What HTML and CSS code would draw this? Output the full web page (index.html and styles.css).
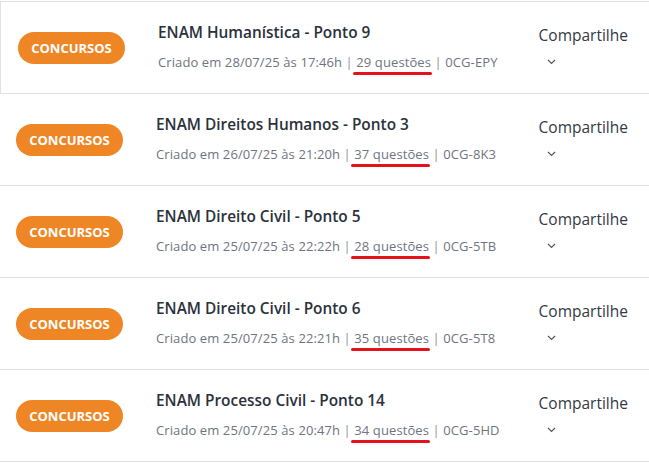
FILE: index.html
```html
<!DOCTYPE html>
<html>
<head>
    <title>Simulados</title>
    <link rel="stylesheet" href="styles.css">
</head>
<body>
    <div class="list">
        <div class="item first">
            <span class="badge">CONCURSOS</span>
            <div class="info">
                <div class="title">ENAM Humanística - Ponto 9</div>
                <div class="meta">Criado em 28/07/25 às 17:46h <span class="sep">|</span> <span class="mark">29 questões</span> <span class="sep">|</span> 0CG-EPY</div>
            </div>
            <div class="share">
                <span>Compartilhe</span>
                <svg class="caret" width="9" height="6" viewBox="0 0 9 6"><path d="M1 1l3.5 3.5L8 1" fill="none" stroke="#555" stroke-width="1.2"/></svg>
            </div>
        </div>
        <div class="item">
            <span class="badge">CONCURSOS</span>
            <div class="info">
                <div class="title">ENAM Direitos Humanos - Ponto 3</div>
                <div class="meta">Criado em 26/07/25 às 21:20h <span class="sep">|</span> <span class="mark">37 questões</span> <span class="sep">|</span> 0CG-8K3</div>
            </div>
            <div class="share">
                <span>Compartilhe</span>
                <svg class="caret" width="9" height="6" viewBox="0 0 9 6"><path d="M1 1l3.5 3.5L8 1" fill="none" stroke="#555" stroke-width="1.2"/></svg>
            </div>
        </div>
        <div class="item">
            <span class="badge">CONCURSOS</span>
            <div class="info">
                <div class="title">ENAM Direito Civil - Ponto 5</div>
                <div class="meta">Criado em 25/07/25 às 22:22h <span class="sep">|</span> <span class="mark">28 questões</span> <span class="sep">|</span> 0CG-5TB</div>
            </div>
            <div class="share">
                <span>Compartilhe</span>
                <svg class="caret" width="9" height="6" viewBox="0 0 9 6"><path d="M1 1l3.5 3.5L8 1" fill="none" stroke="#555" stroke-width="1.2"/></svg>
            </div>
        </div>
        <div class="item">
            <span class="badge">CONCURSOS</span>
            <div class="info">
                <div class="title">ENAM Direito Civil - Ponto 6</div>
                <div class="meta">Criado em 25/07/25 às 22:21h <span class="sep">|</span> <span class="mark">35 questões</span> <span class="sep">|</span> 0CG-5T8</div>
            </div>
            <div class="share">
                <span>Compartilhe</span>
                <svg class="caret" width="9" height="6" viewBox="0 0 9 6"><path d="M1 1l3.5 3.5L8 1" fill="none" stroke="#555" stroke-width="1.2"/></svg>
            </div>
        </div>
        <div class="item">
            <span class="badge">CONCURSOS</span>
            <div class="info">
                <div class="title">ENAM Processo Civil - Ponto 14</div>
                <div class="meta">Criado em 25/07/25 às 20:47h <span class="sep">|</span> <span class="mark">34 questões</span> <span class="sep">|</span> 0CG-5HD</div>
            </div>
            <div class="share">
                <span>Compartilhe</span>
                <svg class="caret" width="9" height="6" viewBox="0 0 9 6"><path d="M1 1l3.5 3.5L8 1" fill="none" stroke="#555" stroke-width="1.2"/></svg>
            </div>
        </div>
    </div>
</body>
</html>
```

FILE: styles.css
```css
body {
    margin: 0;
    padding: 0;
    background-color: #ffffff;
    font-family: "Open Sans", "Liberation Sans", sans-serif;
}
.list {
    padding-top: 1px;
}
.item {
    display: flex;
    align-items: center;
    height: 91px;
    padding: 0 21px 0 16px;
    border-bottom: 1px solid #e2e2e2;
}
.item.first {
    border-top: 1px solid #e2e2e2;
    border-left: 1px solid #e2e2e2;
    padding-left: 17px;
}
.badge {
    display: inline-flex;
    align-items: center;
    justify-content: center;
    width: 107px;
    height: 32px;
    border-radius: 16px;
    background-color: #ee8626; /* laranja */
    color: #ffffff;
    font-size: 13px;
    font-weight: 700;
    flex-shrink: 0;
}
.info {
    flex: 1;
    margin-left: 33px;
}
.title {
    font-size: 15.4px;
    font-weight: 600;
    color: #2b313b;
    line-height: 20px;
}
.meta {
    margin-top: 9px;
    font-size: 13px;
    color: #6e7480;
    line-height: 20px;
    letter-spacing: 0.1px;
}
.sep {
    color: #8a8f99;
}
.mark {
    position: relative;
}
.mark::after {
    content: "";
    position: absolute;
    left: -3px;
    right: -1px;
    bottom: -4px;
    height: 3px;
    border-radius: 2px;
    background-color: #e5121d; /* marcação vermelha */
}
.share {
    display: flex;
    flex-direction: column;
    align-items: flex-start;
    font-size: 15.5px;
    color: #333a45;
    line-height: 20px;
    margin-top: -6px;
}
.caret {
    margin: 14px 0 0 8px;
}
```
